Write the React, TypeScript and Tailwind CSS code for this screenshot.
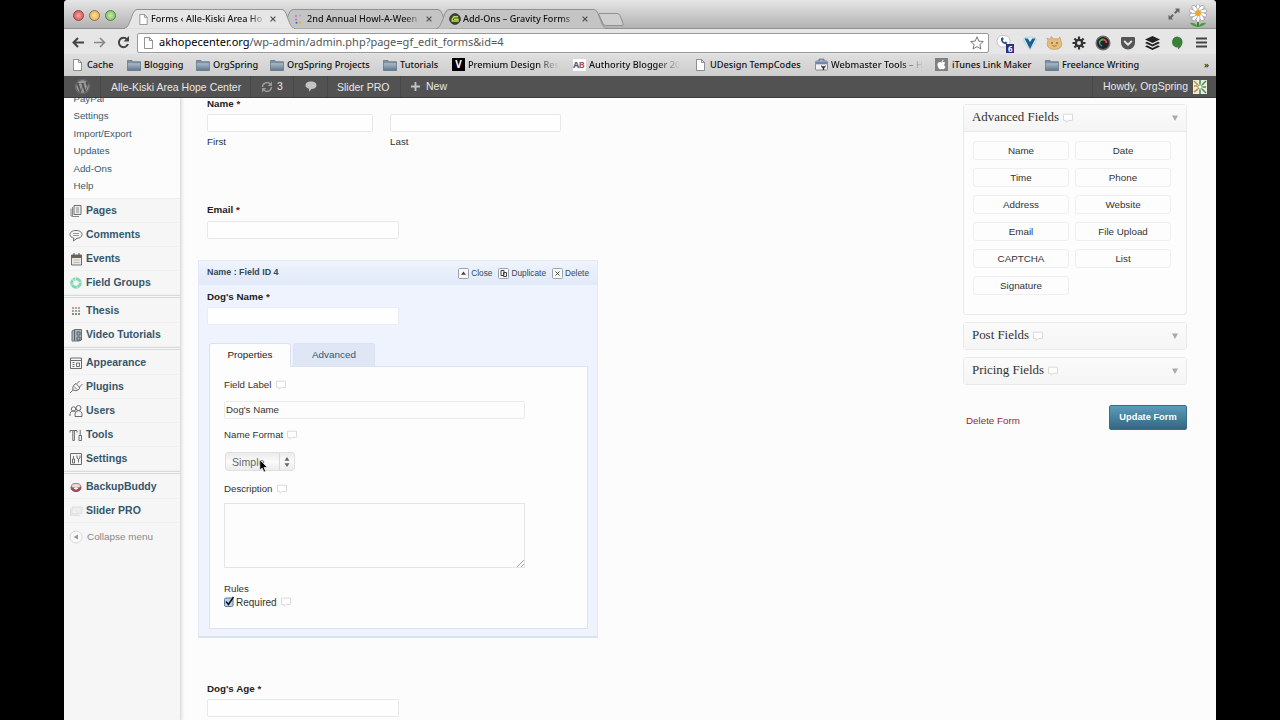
import React from 'react';
import { FaApple, FaCog, FaGetPocket, FaWordpress } from 'react-icons/fa';

const PageIcon: React.FC<{ className?: string }> = ({ className = 'w-[9px] h-[12px]' }) => (
  <svg viewBox="0 0 9 12" className={`shrink-0 ${className}`}>
    <path d="M.5.5h5l3 3v8h-8z" fill="#fff" stroke="#777" strokeWidth=".8" />
    <path d="M5.5.5v3h3" fill="none" stroke="#777" strokeWidth=".8" />
  </svg>
);

const FolderIcon = () => (
  <svg viewBox="0 0 14 12" className="w-[14px] h-[12px] shrink-0">
    <defs>
      <linearGradient id="folder" x1="0" y1="0" x2="0" y2="1">
        <stop offset="0" stopColor="#a9bccb" />
        <stop offset="1" stopColor="#63798c" />
      </linearGradient>
    </defs>
    <path d="M.5 1.5h4.5l1 1.3h7.5v8.7H.5z" fill="#7d93a6" stroke="#566b7d" strokeWidth=".7" />
    <path d="M.8 4.2h12.4v7H.8z" fill="url(#folder)" />
  </svg>
);

const VIcon = () => (
  <div className="w-[13px] h-[13px] bg-black text-white text-[10px] leading-[13px] font-bold text-center shrink-0">V</div>
);

const AbIcon = () => (
  <div className="w-[13px] h-[12px] bg-white text-[9px] leading-[12px] font-bold tracking-[-0.6px] shrink-0">
    <span className="text-[#4a5580]">A</span>
    <span className="text-[#b4544c]">B</span>
  </div>
);

const ToolboxIcon = () => (
  <svg viewBox="0 0 13 13" className="w-[13px] h-[13px] shrink-0">
    <path d="M4 3V1.2h5V3" fill="none" stroke="#666" />
    <rect x=".5" y="3" width="12" height="9" rx="1" fill="#f2f2f2" stroke="#777" strokeWidth=".8" />
    <path d="M1 3.5h11v2.8H1z" fill="#6b86b8" />
    <path d="M6.3 7v2l1.4 1v2h1.5v-2l1.3-1V7l-1 1.3H7.5z" fill="#333" />
  </svg>
);

const AppleIcon = () => (
  <div className="w-[13px] h-[13px] bg-[#808080] flex items-center justify-center shrink-0">
    <FaApple className="w-[11px] h-[11px] text-white" />
  </div>
);

const BubbleIcon = () => (
  <svg viewBox="0 0 10 10" className="w-[10px] h-[10px] shrink-0">
    <path d="M.5 1.200h9v6.200H5L3.300 9.300 2.900 7.400H.5z" fill="#fff" stroke="#d6d6d6" strokeWidth=".9" />
  </svg>
);

interface TabProps {
  title: string;
  active?: boolean;
  icon: React.ReactNode;
  className: string;
}

const Tab: React.FC<TabProps> = ({ title, active, icon, className }) => (
  <div className={`relative h-[20px] shrink-0 ${className}`}>
    <svg viewBox="0 0 171 20" preserveAspectRatio="none" className="absolute inset-0 w-full h-full">
      <path
        d="M0 19.5C4 19 5 15 9 4.500Q10.500 .5 13 .5H158Q160.500 .5 162 4.500C166 15 167 19 171 19.500"
        fill={active ? '#e6e6e6' : '#c4c4c4'}
        stroke="#8a8a8a"
        strokeWidth=".9"
      />
      {active && <path d="M1 20H170" stroke="#e6e6e6" strokeWidth="1.400" />}
    </svg>
    <div className="relative flex items-center h-[20px] pl-[13px]">
      <div className="w-[12px] flex justify-center shrink-0">{icon}</div>
      <span className="w-[116px] ml-px pl-px overflow-hidden whitespace-nowrap text-[9.1px] font-medium text-[#111] mask-r-from-85%">
        {title}
      </span>
      <svg viewBox="0 0 6 6" className="w-[6px] h-[6px] ml-[4px]">
        <path d="M.6.6l4.800 4.800M5.400.6L.6 5.400" stroke="#555" strokeWidth="1.300" />
      </svg>
    </div>
  </div>
);

const TabStrip = () => (
  <div className="flex items-start h-[29px] bg-linear-to-b from-[#e6e6e6] to-[#b2b2b2] border-b border-[#909090] pt-[9px]">
    <div className="flex gap-[5px] pl-[9px] pt-px w-[60px] shrink-0">
      <div className="w-[11px] h-[11px] rounded-full bg-radial from-[#f5a9a9] to-[#cf3a45] border border-[#8d4448]" />
      <div className="w-[11px] h-[11px] rounded-full bg-radial from-[#fbe3a4] to-[#e0a13a] border border-[#94733d]" />
      <div className="w-[11px] h-[11px] rounded-full bg-radial from-[#c9ecab] to-[#71b552] border border-[#587c49]" />
    </div>
    <Tab active title="Forms ‹ Alle-Kiski Area Ho" icon={<PageIcon className="w-[9px] h-[11px]" />} className="w-[171px] z-10" />
    <Tab
      title="2nd Annual Howl-A-Ween"
      className="w-[171px] -ml-[15px]"
      icon={
        <svg viewBox="0 0 10 10" className="w-[10px] h-[10px]">
          <circle cx="2" cy="2" r="1.2" fill="#e07ab0" />
          <circle cx="6" cy="1.500" r="1" fill="#8fa6e8" />
          <circle cx="2" cy="5.500" r="1" fill="#9c7ad8" />
          <circle cx="2.500" cy="8.700" r="1" fill="#666" />
          <circle cx="6" cy="8.500" r="1" fill="#e8a14c" />
          <circle cx="9" cy="8" r="1" fill="#e8c84c" />
        </svg>
      }
    />
    <Tab
      title="Add-Ons – Gravity Forms"
      className="w-[171px] -ml-[15px]"
      icon={
        <svg viewBox="0 0 12 12" className="w-[12px] h-[12px]">
          <circle cx="6" cy="6" r="5.300" fill="#3d4a2c" stroke="#333" />
          <path d="M9 3.800H5L3.200 6.200V8H9V6.200H5" fill="none" stroke="#b6d957" strokeWidth="1.400" />
        </svg>
      }
    />
    <svg viewBox="0 0 28 13" className="w-[28px] h-[13px] mt-[4px] -ml-[10px]">
      <path d="M2 .5h18q2 0 3 2l3 8q.5 2-1 2H9q-2 0-3-2L2.500 3Q1 .5 2 .5z" fill="#cfcfcf" stroke="#8a8a8a" strokeWidth=".9" />
    </svg>
    <div className="flex-1" />
    <svg viewBox="0 0 12 12" className="w-[12px] h-[12px] mr-[7px] -mt-px" fill="#666">
      <path d="M6.800 .5h4.700v4.700L9.900 3.600 7.600 5.900 6.100 4.400 8.400 2.100zM5.200 11.500H.5V6.800l1.600 1.600 2.300-2.300 1.500 1.500-2.300 2.300z" />
    </svg>
    <svg viewBox="0 0 22 24" className="w-[22px] h-[24px] mr-[7px] -mt-[5px] shrink-0">
      <path d="M11 14v9" stroke="#2e6b2a" strokeWidth="1.600" />
      <path d="M11 23Q5 22 3 19q5-1 8 4 3-5 8-4-2 3-8 4z" fill="#46a03a" />
      <g fill="#fff" stroke="#777" strokeWidth=".5">
        {[0, 36, 72, 108, 144, 180, 216, 252, 288, 324].map((angle) => (
          <ellipse key={angle} cx="11" cy="4" rx="2" ry="4.200" transform={`rotate(${angle} 11 9)`} />
        ))}
      </g>
      <circle cx="11" cy="9" r="3" fill="#f0a62c" />
    </svg>
  </div>
);

const Extensions = () => (
  <>
    <svg viewBox="0 0 20 20" className="w-[20px] h-[20px] mt-[3px]">
      <path d="M2 6.500Q3 1 9 1.500 15 2 15 7q0 6-7 6Q2 13 2 6.500z" fill="#fff" stroke="#aaa" strokeWidth=".6" />
      <path d="M6 4q-1 5 5 6.500l1.500-2-2-1-1 .8Q8 7.500 7.800 6l1-.8-1-2z" fill="#33558c" />
      <rect x="11" y="10" width="8" height="9" fill="#2c2f7a" />
      <text x="13" y="17.500" fontSize="8" fontWeight="bold" fill="#fff">6</text>
    </svg>
    <svg viewBox="0 0 14 14" className="w-[14px] h-[14px]">
      <path d="M.8 3.500Q1 1 4 1h6q3 0 3.200 2.500Q13 7 7 13.500 1 7 .8 3.500z" fill="#d5edf7" stroke="#a2bccb" strokeWidth=".5" />
      <path d="M1.500 2.500h3.300L7 6l2.300-3.500h3.200L7 13z" fill="#1d5f94" />
    </svg>
    <svg viewBox="0 0 17 14" className="w-[17px] h-[14px]">
      <path d="M1 2l3 1.500 1-3 3 2.500q2-.5 4 0l2-2 .8 3.500Q17 8 15 11q-2 2.500-6.500 2.500T2 11Q0 8 2 5z" fill="#e5bd7f" stroke="#b48a50" strokeWidth=".5" />
      <circle cx="6" cy="7" r=".8" fill="#5b3b1c" />
      <circle cx="11" cy="7" r=".8" fill="#5b3b1c" />
      <path d="M6.500 9.500q2 1.500 4 0" fill="none" stroke="#7b5b2c" strokeWidth=".7" />
    </svg>
    <svg viewBox="0 0 14 14" className="w-[14px] h-[14px]">
      <g stroke="#333" strokeWidth="2.200">
        {[0, 45, 90, 135].map((angle) => (
          <path key={angle} d="M7 .5v13" transform={`rotate(${angle} 7 7)`} />
        ))}
      </g>
      <circle cx="7" cy="7" r="4.300" fill="#333" />
      <circle cx="7" cy="7" r="2" fill="#e6e6e6" />
    </svg>
    <svg viewBox="0 0 16 16" className="w-[16px] h-[16px]">
      <circle cx="8" cy="8" r="6.800" fill="#242424" stroke="#707070" strokeWidth="1.500" />
      <path d="M4.500 8A3.500 3.500 0 0 1 8 4.500" fill="none" stroke="#4cb04a" strokeWidth="1.800" />
      <path d="M8 4.500A3.500 3.500 0 0 1 11.500 8" fill="none" stroke="#db4f45" strokeWidth="1.800" />
      <path d="M4.500 8A3.500 3.500 0 0 0 7 11" fill="none" stroke="#3d80c4" strokeWidth="1.600" />
    </svg>
    <FaGetPocket className="w-[16px] h-[16px] text-[#555]" />
    <svg viewBox="0 0 15 14" className="w-[15px] h-[14px]" fill="#222">
      <path d="M7.500 0L15 3.500 7.500 7 0 3.500z" />
      <path d="M2 5.800L0 6.900l7.500 3.500L15 6.900l-2-1.100-5.500 2.600z" />
      <path d="M2 9.300L0 10.400l7.500 3.500 7.500-3.500-2-1.100-5.500 2.600z" />
    </svg>
    <svg viewBox="0 0 12 14" className="w-[12px] h-[14px]">
      <path d="M6 .5a5.500 5.500 0 0 1 5.500 5.500Q11.500 10 7 13.500v-2A5.500 5.500 0 1 1 6 .5z" fill="#3c7e3c" />
    </svg>
    <svg viewBox="0 0 11 11" className="w-[11px] h-[11px]">
      <path d="M0 1.500h11M0 5.500h11M0 9.500h11" stroke="#444" strokeWidth="2" />
    </svg>
  </>
);

const Toolbar = () => (
  <div className="flex items-center h-[25px] pt-[2px] bg-[#e6e6e6]">
    <svg viewBox="0 0 12 11" className="w-[12px] h-[11px] ml-[8px]">
      <path d="M12 5.500H2M6 1L1.500 5.500 6 10" fill="none" stroke="#444" strokeWidth="2" />
    </svg>
    <svg viewBox="0 0 12 11" className="w-[12px] h-[11px] ml-[10px]">
      <path d="M0 5.500h10M6 1l4.500 4.500L6 10" fill="none" stroke="#888" strokeWidth="1.600" />
    </svg>
    <svg viewBox="0 0 13 13" className="w-[13px] h-[13px] ml-[11px]">
      <path d="M10 3.200A4.700 4.700 0 1 0 11 8" fill="none" stroke="#444" strokeWidth="2" />
      <path d="M12 0v5.500H6.500z" fill="#444" />
    </svg>
    <div className="flex items-center w-[852px] h-[20px] ml-[7px] pl-[6px] pr-[4px] bg-white border border-[#999] rounded-[2px]">
      <PageIcon />
      <span className="ml-[6px] text-[11px] text-[#555] whitespace-nowrap">
        <span className="text-black">akhopecenter.org</span>/wp-admin/admin.php?page=gf_edit_forms&amp;id=4
      </span>
      <svg viewBox="0 0 14 14" className="w-[14px] h-[14px] ml-auto">
        <path d="M7 .8l1.800 4.300 4.500.4-3.400 3 1 4.500L7 10.600 3.100 13l1-4.500-3.400-3 4.500-.4z" fill="#fff" stroke="#666" strokeWidth=".9" />
      </svg>
    </div>
    <div className="grid grid-cols-9 place-items-center w-[221px] ml-[4px] shrink-0">
      <Extensions />
    </div>
  </div>
);

const bookmarks = [
  { label: 'Cache', icon: <PageIcon />, width: 'w-[54px]', gap: 'ml-[5px]' },
  { label: 'Blogging', icon: <FolderIcon />, width: 'w-[69px]', gap: 'ml-[3px]' },
  { label: 'OrgSpring', icon: <FolderIcon />, width: 'w-[74px]', gap: 'ml-[3px]' },
  { label: 'OrgSpring Projects', icon: <FolderIcon />, width: 'w-[113px]', gap: 'ml-[3px]' },
  { label: 'Tutorials', icon: <FolderIcon />, width: 'w-[69px]', gap: 'ml-[3px]' },
  { label: 'Premium Design Res', icon: <VIcon />, width: 'w-[121px]', gap: 'ml-[3px]', fade: true },
  { label: 'Authority Blogger 20', icon: <AbIcon />, width: 'w-[123px]', gap: 'ml-[3px]', fade: true },
  { label: 'UDesign TempCodes', icon: <PageIcon />, width: 'w-[119px]', gap: 'ml-[5px]' },
  { label: 'Webmaster Tools – H', icon: <ToolboxIcon />, width: 'w-[120px]', gap: 'ml-[3px]', fade: true },
  { label: 'iTunes Link Maker', icon: <AppleIcon />, width: 'w-[110px]', gap: 'ml-[4px]' },
  { label: 'Freelance Writing', icon: <FolderIcon />, width: 'w-[159px]', gap: 'ml-[3px]' },
];

const BookmarksBar = () => (
  <div className="flex items-center h-[22px] pl-[9px] bg-linear-to-b from-[#dfdfdf] to-[#cdcdcd] text-[9.2px] font-medium text-[#111]">
    {bookmarks.map((b) => (
      <div key={b.label} className={`flex items-center shrink-0 ${b.width}`}>
        {b.icon}
        <span className={`whitespace-nowrap ${b.gap} ${b.fade ? 'mask-r-from-75%' : ''}`}>{b.label}</span>
      </div>
    ))}
    <span>»</span>
  </div>
);

const AdminBar = () => (
  <div className="flex items-center h-[22px] bg-[#525252] border-b border-[#3c3c3c] text-[10.5px] text-[#e8e8e8] whitespace-nowrap">
    <div className="flex items-center justify-center w-[37px] h-full border-r border-[#474747]">
      <FaWordpress className="w-[15px] h-[15px] text-[#999]" />
    </div>
    <div className="w-[150px] h-full pl-[10px] leading-[22px] border-r border-[#474747]">Alle-Kiski Area Hope Center</div>
    <div className="flex items-center w-[43px] h-full pl-[10px] border-r border-[#474747]">
      <svg viewBox="0 0 12 12" className="w-[12px] h-[12px] mr-[4px]">
        <path d="M1.500 6A4.500 4.500 0 0 1 9 2.800M10.500 6A4.500 4.500 0 0 1 3 9.200" fill="none" stroke="#999" strokeWidth="1.500" />
        <path d="M11 .5V5H6.500zM1 11.500V7h4.500z" fill="#999" />
      </svg>
      3
    </div>
    <div className="flex items-center justify-center w-[34px] h-full border-r border-[#474747]">
      <svg viewBox="0 0 12 11" className="w-[12px] h-[11px]">
        <path d="M6 .5c3.200 0 5.500 1.500 5.500 3.700S9.500 8 6.500 8L4 10.800V7.700C2 7.200.5 6 .5 4.200.5 2 2.800.5 6 .5z" fill="#c4c4c4" />
      </svg>
    </div>
    <div className="w-[72px] h-full pl-[9px] leading-[22px]">Slider PRO</div>
    <div className="flex items-center h-full pl-[10px] border-l border-[#474747]">
      <svg viewBox="0 0 9 9" className="w-[9px] h-[9px] mr-[6px]">
        <path d="M4.500 0v9M0 4.500h9" stroke="#c4c4c4" strokeWidth="1.800" />
      </svg>
      New
    </div>
    <div className="flex items-center h-full ml-auto pl-[10px] pr-[9px] border-l border-[#474747]">
      Howdy, OrgSpring
      <svg viewBox="0 0 14 14" className="w-[14px] h-[14px] ml-[5px]">
        <path d="M0 0h14v14H0z" fill="#eceedd" />
        <path d="M1 1l4 4M1 6h3M1 12l4-3" stroke="#c8913e" strokeWidth="1.600" />
        <path d="M13 1L9 5M13 7h-3M13 13L9 9M7 0v4M7 14v-4" stroke="#4d8a5c" strokeWidth="1.600" />
        <circle cx="7" cy="7" r="2.200" fill="#fff" stroke="#769b57" />
      </svg>
    </div>
  </div>
);

const MenuSvg: React.FC<{ children: React.ReactNode }> = ({ children }) => (
  <svg viewBox="0 0 14 14" className="w-[14px] h-[14px] shrink-0" fill="none" stroke="#6e6e6e" strokeWidth="1">
    {children}
  </svg>
);

const menuGroups = [
  [
    {
      label: 'Pages',
      icon: (
        <>
          <path d="M5 1.500h7v9H5z" fill="#eee" />
          <path d="M3.500 3v9.500H10M2 4.500v7.500h2M7 4h3M7 6h3M7 8h3" stroke="#888" />
        </>
      ),
    },
    {
      label: 'Comments',
      icon: (
        <>
          <path d="M7 2.500c3.500 0 6 1.500 6 4s-2.500 3.800-5 3.800L4.500 13l.3-3C2.500 9.500 1 8.500 1 6.500c0-2.500 2.500-4 6-4z" fill="#f4f4f4" />
          <path d="M4 5.500h6M4 7.500h6" stroke="#999" />
        </>
      ),
    },
    {
      label: 'Events',
      icon: (
        <>
          <path d="M2.500 3h10v10h-10z" fill="#e9e7e3" />
          <path d="M2.500 4.500h10" stroke="#6b6358" strokeWidth="3" />
          <path d="M5 1v3M10 1v3" stroke="#555" />
          <path d="M4.500 8h6M4.500 10.500h6" stroke="#bbb" />
        </>
      ),
    },
    {
      label: 'Field Groups',
      icon: (
        <>
          <circle cx="7" cy="7" r="4.300" stroke="#7fd9b4" strokeWidth="3" />
          <path d="M7 0l-1 4M14 6l-4 .5M9 13.500l-1-3M1 10l3-2M2 3l3 1.500" stroke="#d8f5e9" strokeWidth=".8" />
        </>
      ),
    },
  ],
  [
    {
      label: 'Thesis',
      icon: (
        <g strokeWidth="2" strokeDasharray="2 1">
          <path d="M3 4h8" stroke="#c99a9a" />
          <path d="M3 7h8" stroke="#8fb08f" />
          <path d="M3 10h8" stroke="#8a8a8a" />
        </g>
      ),
    },
    {
      label: 'Video Tutorials',
      icon: (
        <>
          <path d="M3 3l3-1.500h6.500V12L10 13H3z" fill="#a9b4bd" />
          <path d="M5.500 2v10.500M8 4h3v3H8zM8 9h3v3H8z" stroke="#54626e" />
        </>
      ),
    },
  ],
  [
    {
      label: 'Appearance',
      icon: (
        <>
          <path d="M1.500 2h11v10.500h-11zM1.500 4.500h11" />
          <path d="M3.500 6.500h2M3.500 8.500h2M3.500 10.500h2M7.500 7h3v3.500h-3z" />
        </>
      ),
    },
    {
      label: 'Plugins',
      icon: <path d="M1 13l3-3M4 10q-1-3 1-5l2-1.500L11 8 9 10q-2 1.500-5 0zM7.500 4L10.500 1M10.500 7L13.500 4M5 6.500l3 3" />,
    },
    {
      label: 'Users',
      icon: (
        <>
          <circle cx="4.500" cy="5" r="2.200" />
          <circle cx="9.500" cy="4" r="2.500" />
          <path d="M1 12q-.5-5 3.500-5 2 0 2.500 1.500M6 12.500q-.5-5.800 3.500-5.800t3.500 5.800z" />
        </>
      ),
    },
    {
      label: 'Tools',
      icon: <path d="M1 4.500V2.500h7v2M3.800 3v9.500h1.600V3M11.200 2v5M10 7.500h2.500v5H10z" />,
    },
    {
      label: 'Settings',
      icon: <path d="M1.500 1.500h11v11h-11zM4.500 4v3M3.500 7h2v4h-2zM9.500 10.500V7M8 3.500V6l1.500 1.200L11 6V3.500" />,
    },
  ],
  [
    {
      label: 'BackupBuddy',
      icon: (
        <>
          <ellipse cx="7" cy="7.800" rx="5" ry="3.800" fill="#a84a52" stroke="#8a5055" />
          <ellipse cx="7" cy="5.800" rx="4.500" ry="2.300" fill="#e8d9da" stroke="#a98085" />
          <path d="M5 8.500h4M7 7v3" stroke="#fff" />
        </>
      ),
    },
    {
      label: 'Slider PRO',
      icon: <path d="M3 3h10v6.500H3zM1.500 5v6.500H11" fill="#ececec" stroke="#dedede" />,
    },
  ],
];

const Sidebar = () => (
  <div className="w-[117px] shrink-0 bg-[#f6f6f6] border-r border-[#dedede] shadow-[1px_0_3px_rgba(0,0,0,0.12)]">
    <div className="h-[101px] bg-[#fcfcfc] pl-[9.5px] overflow-hidden border-b border-[#eeeeee]">
      <div className="-mt-[8.5px] text-[9.7px] leading-[17.6px] text-[#3c5a6c]">
        {['PayPal', 'Settings', 'Import/Export', 'Updates', 'Add-Ons', 'Help'].map((item) => (
          <div key={item}>{item}</div>
        ))}
      </div>
    </div>
    {menuGroups.map((group, i) => (
      <div key={i} className={i > 0 ? 'border-t-[3px] border-double border-[#d9d9d9] pt-px' : ''}>
        {group.map((item) => (
          <div key={item.label} className="flex items-center h-[24px] pl-[5px] pt-px border-b border-[#efefef]">
            <MenuSvg>{item.icon}</MenuSvg>
            <span className="ml-[3px] text-[10.5px] font-bold text-[#36566b] whitespace-nowrap">{item.label}</span>
          </div>
        ))}
      </div>
    ))}
    <div className="flex items-center h-[28px] pl-[5px] text-[9.9px] text-[#888]">
      <svg viewBox="0 0 14 14" className="w-[14px] h-[14px]">
        <circle cx="7" cy="7" r="6" fill="#fafafa" stroke="#dadada" />
        <path d="M9 4.500v5L4.500 7z" fill="#999" />
      </svg>
      <span className="ml-[4px]">Collapse menu</span>
    </div>
  </div>
);

const FieldInput: React.FC<{ className?: string }> = ({ className = 'w-[192px] border-[#e8e8e8]' }) => (
  <div className={`h-[18px] bg-[#fefefe] border rounded-[2px] ${className}`} />
);

const Label: React.FC<{ children: React.ReactNode }> = ({ children }) => (
  <div className="h-[14px] text-[9.8px] leading-[14px] font-bold text-[#222]">
    {children} <span className="text-[#5a2020]">*</span>
  </div>
);

const ActionButton: React.FC<{ label: string; path: string; fill?: boolean }> = ({ label, path, fill }) => (
  <div className="flex items-center text-[8.3px] text-[#34495a]">
    <svg viewBox="0 0 11 11" className="w-[11px] h-[11px] mr-[2px]">
      <rect x=".5" y=".5" width="10" height="10" rx="1" fill="#f8f8f8" stroke="#9aa3ab" />
      <path d={path} fill={fill ? '#444' : 'none'} stroke={fill ? 'none' : '#444'} />
    </svg>
    {label}
  </div>
);

const FieldSettings = () => (
  <div className="w-[379px] h-[263px] ml-[10px] pl-[14px] bg-[#fdfdfd] border border-[#dbe3ee] text-[9.7px] text-[#333]">
    <div className="flex items-center gap-[5px] h-[14px] mt-[11px]">
      Field Label <BubbleIcon />
    </div>
    <div className="w-[301px] h-[18px] mt-[9px] pl-px bg-[#fdfdfd] border border-[#ebebeb] rounded-[2px] leading-[16px] text-[9.7px]">
      Dog's Name
    </div>
    <div className="flex items-center gap-[4px] h-[14px] mt-[9px]">
      Name Format <BubbleIcon />
    </div>
    <div className="relative flex w-[70px] h-[19px] mt-[10px] ml-px border border-[#e0e0e0] rounded-[3px] bg-linear-to-b from-[#ececec] via-[#fafafa] to-[#ececec]">
      <span className="w-[54px] pl-[6px] text-[10.6px] leading-[18px] text-[#666] border-r border-[#d9d9d9]">Simple</span>
      <svg viewBox="0 0 6 10" className="w-[6px] h-[10px] mt-[4px] ml-[4px]" fill="#666">
        <path d="M3 0l2.500 3.700H.5zM3 10L.5 6.300h5z" />
      </svg>
      <svg viewBox="0 0 10 15" className="absolute left-[33px] top-[6px] w-[10px] h-[15px]">
        <path d="M.8.8v10.400l2.400-2.200 1.700 4 1.800-.8L5 8.500h3.500z" fill="#000" stroke="#fff" strokeWidth=".7" />
      </svg>
    </div>
    <div className="flex items-center gap-[5px] h-[14px] mt-[11px]">
      Description <BubbleIcon />
    </div>
    <div className="flex items-end justify-end w-[301px] h-[65px] mt-[7px] border border-[#e6e6e6] bg-[#fdfdfd]">
      <svg viewBox="0 0 7 7" className="w-[7px] h-[7px]">
        <path d="M0 7l7-7M4 7l3-3" stroke="#888" strokeWidth=".8" />
      </svg>
    </div>
    <div className="h-[14px] mt-[14px] leading-[14px]">Rules</div>
    <div className="flex items-center h-[12px]">
      <svg viewBox="0 0 11 12" className="w-[11px] h-[12px]">
        <rect x=".5" y="2" width="8.500" height="8.500" rx="1.500" fill="#b9d3ee" stroke="#5c7896" />
        <path d="M2 5.500l2.500 3L9.500 1" fill="none" stroke="#111" strokeWidth="1.600" />
      </svg>
      <span className="ml-px mr-[4px] text-[10px]">Required</span>
      <BubbleIcon />
    </div>
  </div>
);

const SelectedField = () => (
  <div className="w-[400px] h-[378px] mt-[21px] bg-[#eef3fd] border border-[#e4eaf4] border-b-2 border-b-[#dbe3ed]">
    <div className="flex items-center h-[24px] pl-[8px] pr-[8px] bg-linear-to-b from-[#eff4fd] to-[#e1e8f8]">
      <span className="text-[8.9px] font-bold text-[#34495a]">Name : Field ID 4</span>
      <div className="flex gap-[6px] ml-auto">
        <ActionButton label="Close" path="M5.500 3.500L8 6.800H3z" fill />
        <ActionButton label="Duplicate" path="M3 2.500h3v5H3zM5.500 4.500h3v4h-3z" />
        <ActionButton label="Delete" path="M3.500 3.500l4 4M7.500 3.500l-4 4" />
      </div>
    </div>
    <div className="pl-[8px] pt-[5px]">
      <Label>Dog's Name</Label>
      <div className="mt-[3px]">
        <FieldInput className="w-[192px] border-[#e8edf6]" />
      </div>
    </div>
    <div className="flex gap-[2px] mt-[18px] ml-[10px] text-[9.9px] text-center leading-[21px]">
      <div className="relative z-10 w-[82px] h-[24px] -mb-px bg-[#fdfdfd] border border-b-0 border-[#dbe3ee] rounded-t-[3px] text-[#222]">Properties</div>
      <div className="w-[82px] h-[23px] bg-[#dfe6f6] border border-b-0 border-[#dbe3f3] rounded-t-[3px] text-[#34566b]">Advanced</div>
    </div>
    <FieldSettings />
  </div>
);

const FormEditor = () => (
  <div className="w-[400px] ml-[17px] shrink-0">
    <div className="pl-[9px] -mt-px text-[9.8px] text-[#333]">
      <Label>Name</Label>
      <div className="flex gap-[17px] mt-[3px]">
        <FieldInput className="w-[166px] border-[#e8e8e8]" />
        <FieldInput className="w-[171px] border-[#e8e8e8] shrink-0" />
      </div>
      <div className="flex h-[14px] mt-[3px] leading-[14px]">
        <span className="w-[183px]">First</span>
        <span>Last</span>
      </div>
      <div className="mt-[54px]">
        <Label>Email</Label>
      </div>
      <FieldInput className="w-[192px] border-[#e8e8e8] mt-[4px]" />
    </div>
    <SelectedField />
    <div className="pl-[9px] mt-[44px]">
      <Label>Dog's Age</Label>
      <FieldInput className="w-[192px] border-[#e8e8e8] mt-[3px]" />
    </div>
  </div>
);

const BoxHeader: React.FC<{ title: string }> = ({ title }) => (
  <div className="flex items-center h-[26px] pl-[8px] pr-[8px] bg-linear-to-b from-[#fbfbfb] to-[#f5f5f5]">
    <span className="font-['Liberation_Serif',serif] text-[12.900px] text-[#333]">{title}</span>
    <span className="ml-[4px]">
      <BubbleIcon />
    </span>
    <svg viewBox="0 0 6 6" className="w-[6px] h-[6px] ml-auto">
      <path d="M0 .5h6L3 6z" fill="#aaa" />
    </svg>
  </div>
);

const advancedFields = [
  'Name', 'Date', 'Time', 'Phone', 'Address', 'Website',
  'Email', 'File Upload', 'CAPTCHA', 'List', 'Signature',
];

const FieldPalette = () => (
  <div className="w-[224px] ml-auto mr-[29px] pt-[6px] shrink-0">
    <div className="h-[211px] border border-[#eaeaea] rounded-[3px] bg-[#fdfdfe]">
      <div className="border-b border-[#eaeaea]">
        <BoxHeader title="Advanced Fields" />
      </div>
      <div className="grid grid-cols-[96px_96px] gap-x-[6px] gap-y-[8.200px] pl-[9px] pt-[8.500px]">
        {advancedFields.map((field) => (
          <div
            key={field}
            className="h-[19px] border border-[#efeff1] rounded-[3px] text-[9.8px] leading-[17px] text-center text-[#333]"
          >
            {field}
          </div>
        ))}
      </div>
    </div>
    <div className="mt-[7px] border border-[#eaeaea] rounded-[3px]">
      <BoxHeader title="Post Fields" />
    </div>
    <div className="mt-[7px] border border-[#eaeaea] rounded-[3px]">
      <BoxHeader title="Pricing Fields" />
    </div>
    <div className="flex items-start justify-between mt-[20px] pl-[3px]">
      <span className="mt-[8px] text-[9.8px] leading-[15px] text-[#a01f35]">Delete Form</span>
      <button className="w-[78px] h-[25px] rounded-[2px] border border-[#3a6d87] bg-linear-to-b from-[#5b9cbc] to-[#34677f] text-[9.3px] font-bold text-white">
        Update Form
      </button>
    </div>
  </div>
);

const App: React.FC = () => {
  return (
    <div className="w-[1280px] h-[720px] bg-black flex justify-center overflow-hidden font-['Liberation_Sans',Arial,sans-serif]">
      <div className="flex flex-col w-[1152px] h-full bg-[#fcfcfc] rounded-t-[4px] overflow-hidden">
        <div className="font-['Noto_Sans',sans-serif]">
          <TabStrip />
          <Toolbar />
          <BookmarksBar />
        </div>
        <AdminBar />
        <div className="flex flex-1 min-h-0 overflow-hidden">
          <Sidebar />
          <FormEditor />
          <FieldPalette />
        </div>
      </div>
    </div>
  );
};

export default App;
